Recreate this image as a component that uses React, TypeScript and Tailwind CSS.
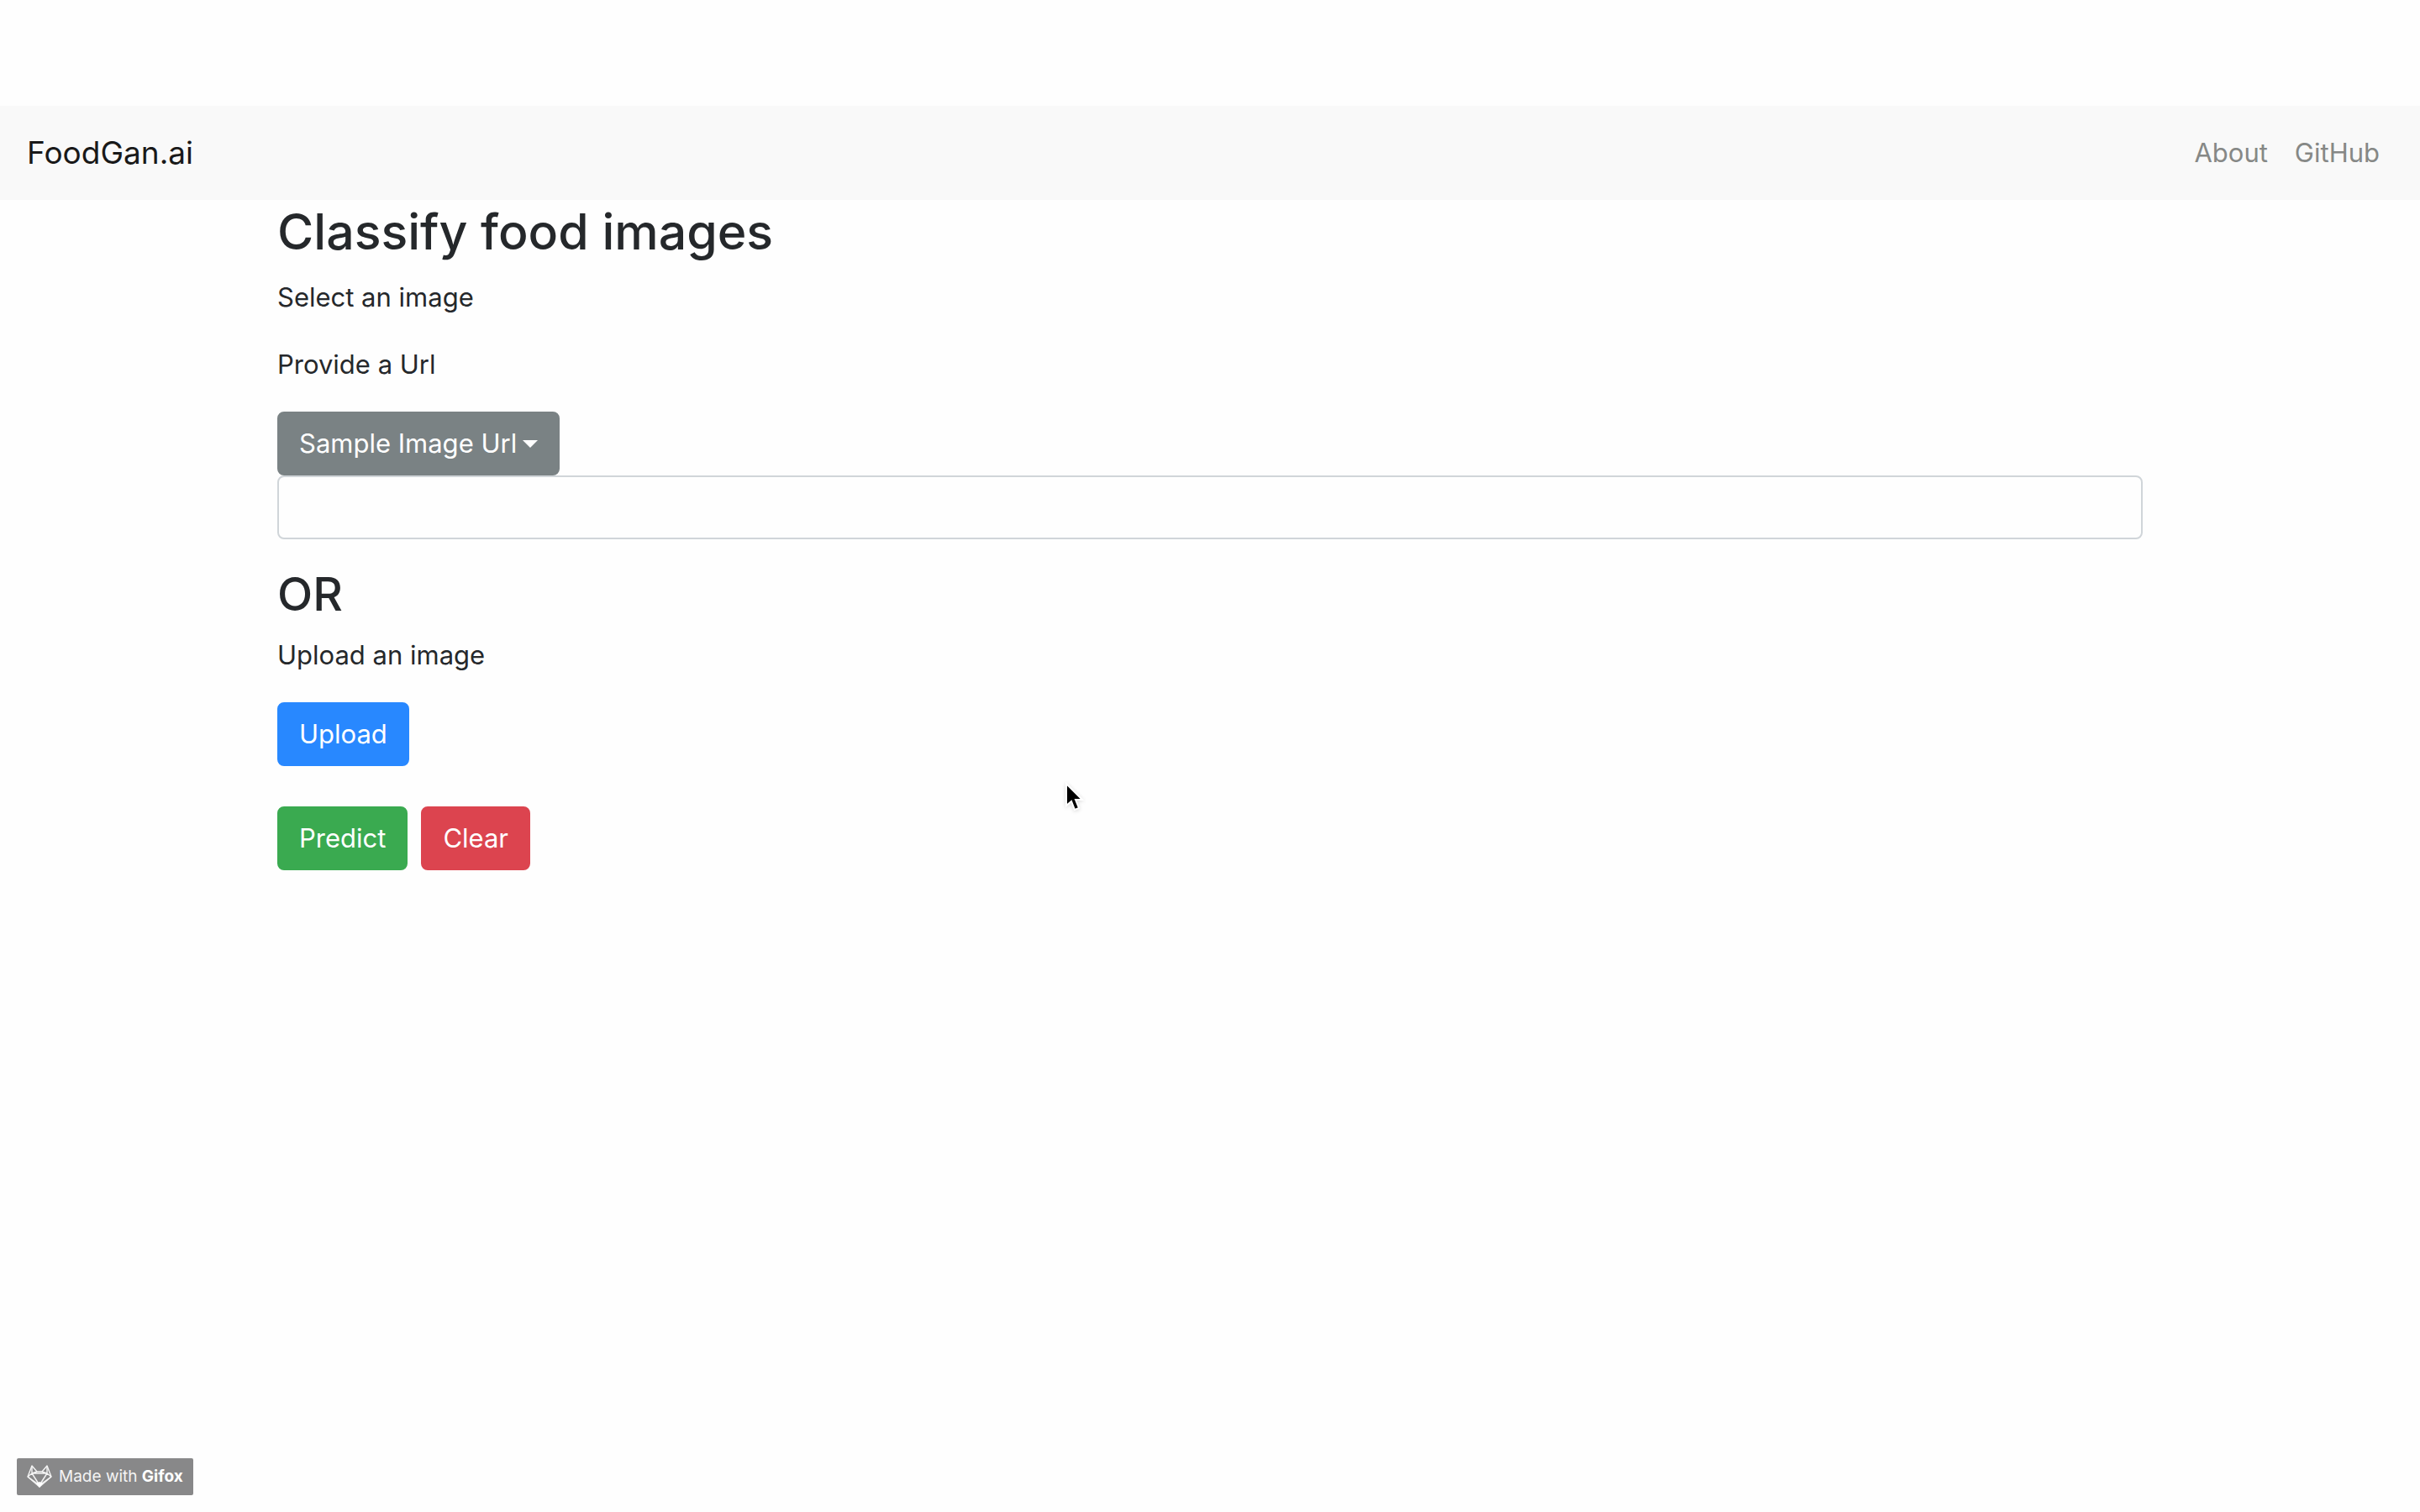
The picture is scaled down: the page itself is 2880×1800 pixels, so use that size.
import React from "react";

const buttonBase =
  "h-19 rounded-lg border-2 px-6 text-[31px] leading-12 text-white cursor-pointer";

function NavBar() {
  return (
    <nav className="flex h-28 items-center justify-between bg-[#f9f9f9] px-8">
      <a href="#home" className="text-[37px] leading-15 text-[#191919]">
        FoodGan.ai
      </a>
      <ul className="flex text-[31px] leading-12 text-[#868886]">
        <li>
          <a href="#about" className="block px-4">
            About
          </a>
        </li>
        <li>
          <a href="#github" className="block px-4">
            GitHub
          </a>
        </li>
      </ul>
    </nav>
  );
}

function SampleSelect() {
  return (
    <div className="relative w-fit">
      <select
        aria-label="Sample Image Url"
        className="block h-19 cursor-pointer appearance-none rounded-lg border-2 border-[#7a8284] bg-[#7a8284] pr-12 pl-6 text-[31px] leading-12 text-white"
      >
        <option>Sample Image Url</option>
      </select>
      <svg
        viewBox="0 0 18 9"
        className="pointer-events-none absolute top-[34px] right-[26px] h-[9px] w-[18px]"
        aria-hidden="true"
      >
        <path d="M0 0H18L9 9Z" fill="#fff" />
      </svg>
    </div>
  );
}

function GifoxBadge() {
  return (
    <a
      href="#gifox"
      className="fixed bottom-5 left-5 flex h-11 items-center gap-2 rounded-xs bg-[#888889] px-3 text-[19px] text-[#f4f4f4]"
    >
      <svg viewBox="0 0 30 28" className="h-7 w-[30px]" aria-hidden="true">
        <g fill="none" stroke="#f4f4f4" strokeWidth="1.4" strokeLinejoin="round">
          <path d="M6 1L1 14L15 26L29 14L24 1L18 8H12Z" />
          <path d="M6 1V10H24V1M1 14L6 10L15 24L24 10L29 14M12 8L6 10M18 8L24 10M1 14L15 24L29 14" />
        </g>
        <path d="M11 22L15 20L19 22L15 27Z" fill="#fff" />
      </svg>
      <span>
        Made with <strong className="font-bold text-white">Gifox</strong>
      </span>
    </a>
  );
}

function Pointer() {
  return (
    <svg
      viewBox="0 0 24 36"
      className="pointer-events-none absolute top-[931px] left-[1267px] h-9 w-6 drop-shadow-sm"
      aria-hidden="true"
    >
      <path
        d="M2 2V28L8 23L12 33L17 31L13 21H21Z"
        fill="#000"
        stroke="#fff"
        strokeWidth="2"
      />
    </svg>
  );
}

export default function App() {
  return (
    <div className="relative min-h-screen bg-[#fefefe] pt-[126px] font-['Inter',sans-serif] text-[#25282b]">
      <NavBar />
      <main className="mx-auto max-w-[2280px] px-[30px]">
        <h1 className="mb-4 text-[59px] leading-19 font-medium">Classify food images</h1>
        <p className="mb-8 text-[31px] leading-12">Select an image</p>
        <label htmlFor="image-url" className="mb-8 block text-[31px] leading-12">
          Provide a Url
        </label>
        <SampleSelect />
        <input
          id="image-url"
          type="text"
          className="mb-8 block h-19 w-full rounded-lg border-2 border-[#d0d5d9] bg-[#fefefe] px-6 text-[31px] leading-12"
        />
        <h2 className="mb-4 text-[55px] leading-[66px] font-medium">OR</h2>
        <p className="mb-8 text-[31px] leading-12">Upload an image</p>
        <button type="button" className={`${buttonBase} mb-12 block border-[#2888ff] bg-[#2888ff]`}>
          Upload
        </button>
        <div className="flex gap-4">
          <button type="button" className={`${buttonBase} border-[#3aaa50] bg-[#3aaa50]`}>
            Predict
          </button>
          <button type="button" className={`${buttonBase} border-[#dc444f] bg-[#dc444f]`}>
            Clear
          </button>
        </div>
      </main>
      <Pointer />
      <GifoxBadge />
    </div>
  );
}
